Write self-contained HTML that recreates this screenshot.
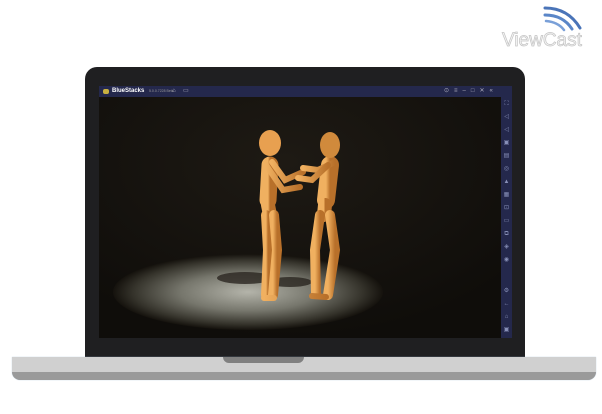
<!DOCTYPE html>
<html><head><meta charset="utf-8"><style>
html,body{margin:0;padding:0;width:602px;height:414px;background:#fff;overflow:hidden;font-family:"Liberation Sans",sans-serif}
.a{position:absolute}
</style></head><body>
<svg class="a" style="left:495px;top:0" width="107" height="50" viewBox="495 0 107 50">
<g fill="none" stroke-linecap="round">
<path d="M545 8 Q568 8 580 28" stroke="#4a74b8" stroke-width="3"/>
<path d="M545 15 Q563 15 572 29" stroke="#5a86c8" stroke-width="3"/>
<path d="M546 21 Q558 22 564 30" stroke="#7aa0d8" stroke-width="2.5"/>
</g>
<text x="502" y="46" font-size="19" fill="#f4f4f4" stroke="#c4c4c4" stroke-width="0.7" font-family="Liberation Sans">ViewCast</text>
</svg>
<div class="a" style="left:85px;top:67px;width:440px;height:292px;background:#1f1f21;border-radius:12px 12px 0 0"></div>
<div class="a" style="left:99px;top:86px;width:413px;height:252px;background:#15120d;overflow:hidden">
<svg width="413" height="252" viewBox="99 86 413 252">
<defs>
<radialGradient id="sp" cx="0.5" cy="0.5" r="0.5">
<stop offset="0" stop-color="#b4b4aa"/><stop offset="0.5" stop-color="#76766c"/><stop offset="0.85" stop-color="#35332b"/><stop offset="1" stop-color="#15120d"/>
</radialGradient>
<radialGradient id="bg" cx="0.45" cy="0.3" r="0.7">
<stop offset="0" stop-color="#1e1a14"/><stop offset="1" stop-color="#0f0d0a"/>
</radialGradient>
<linearGradient id="wd" x1="0" x2="1"><stop offset="0" stop-color="#f0b060"/><stop offset="1" stop-color="#b8702a"/></linearGradient>
</defs>
<rect x="99" y="86" width="413" height="252" fill="url(#bg)"/>
<ellipse cx="248" cy="292" rx="135" ry="38" fill="url(#sp)"/>
<g fill="#2a2620" opacity="0.8"><ellipse cx="245" cy="278" rx="28" ry="6"/><ellipse cx="290" cy="282" rx="22" ry="5"/></g>
<g stroke="url(#wd)" stroke-linecap="round" fill="none">
<path d="M270 165 L268 200" stroke-width="17"/>
<path d="M268 205 L270 215" stroke-width="14"/>
<path d="M266 215 L268 250 L266 295" stroke-width="10"/>
<path d="M274 215 L277 250 L273 295" stroke-width="10"/>
<path d="M272 162 L285 180 L303 172" stroke-width="6"/>
<path d="M266 165 L283 190 L300 187" stroke-width="6"/>
<path d="M270 155 L270 160" stroke-width="6"/>
<path d="M330 165 L326 200" stroke-width="18"/>
<path d="M325 205 L324 215" stroke-width="14"/>
<path d="M320 215 L315 250 L316 293" stroke-width="10"/>
<path d="M330 215 L335 250 L328 295" stroke-width="10"/>
<path d="M335 162 L318 170 L303 168" stroke-width="6"/>
<path d="M328 165 L312 180 L298 178" stroke-width="6"/>
<path d="M330 156 L330 160" stroke-width="6"/>
<path d="M264 298 L274 298 M312 296 L326 297" stroke-width="6"/>
</g>
<ellipse cx="270" cy="143" rx="11" ry="13" fill="#e8a050"/>
<ellipse cx="330" cy="145" rx="10" ry="13" fill="#d08a3c"/>
</svg>
</div>
<div class="a" style="left:99px;top:86px;width:413px;height:11px;background:#24284c;color:#fff;font-size:6px;line-height:11px">
<span class="a" style="left:4px;top:3px;width:6px;height:5px;background:#c8b040;border-radius:2px"></span>
<span class="a" style="left:13px;font-weight:bold">BlueStacks</span>
<span class="a" style="left:50px;font-size:3.5px;color:#999">5.0.0.7228 Beta</span>
<span class="a" style="left:73px;color:#aab">⌂</span><span class="a" style="left:84px;color:#aab">▭</span>
<span class="a" style="left:345px;color:#aab;letter-spacing:5px">⊙≡–□✕«</span>
</div>
<div class="a" style="left:501px;top:97px;width:11px;height:241px;background:#24284c"></div>
<div class="a" style="left:501px;top:97px;width:11px;color:#8890b8;font-size:6px;text-align:center;line-height:13px">
<div style="margin-top:1px">⛶</div><div>◁</div><div>◁</div><div>▣</div><div>▤</div><div>◎</div><div>▲</div><div>▦</div><div>⊡</div><div>▭</div><div>⧉</div><div>◈</div><div>◉</div>
<div style="margin-top:18px">⚙</div><div>←</div><div>⌂</div><div>▣</div>
</div>
<div class="a" style="left:12px;top:357px;width:584px;height:23px;background:#9a9a9a;border-radius:0 0 8px 8px;box-shadow:0 0 1px #a8c4d8"></div>
<div class="a" style="left:12px;top:357px;width:584px;height:15px;background:#d0d0d0"></div>
<div class="a" style="left:223px;top:357px;width:81px;height:6px;background:#808080;border-radius:0 0 6px 6px"></div>
</body></html>
